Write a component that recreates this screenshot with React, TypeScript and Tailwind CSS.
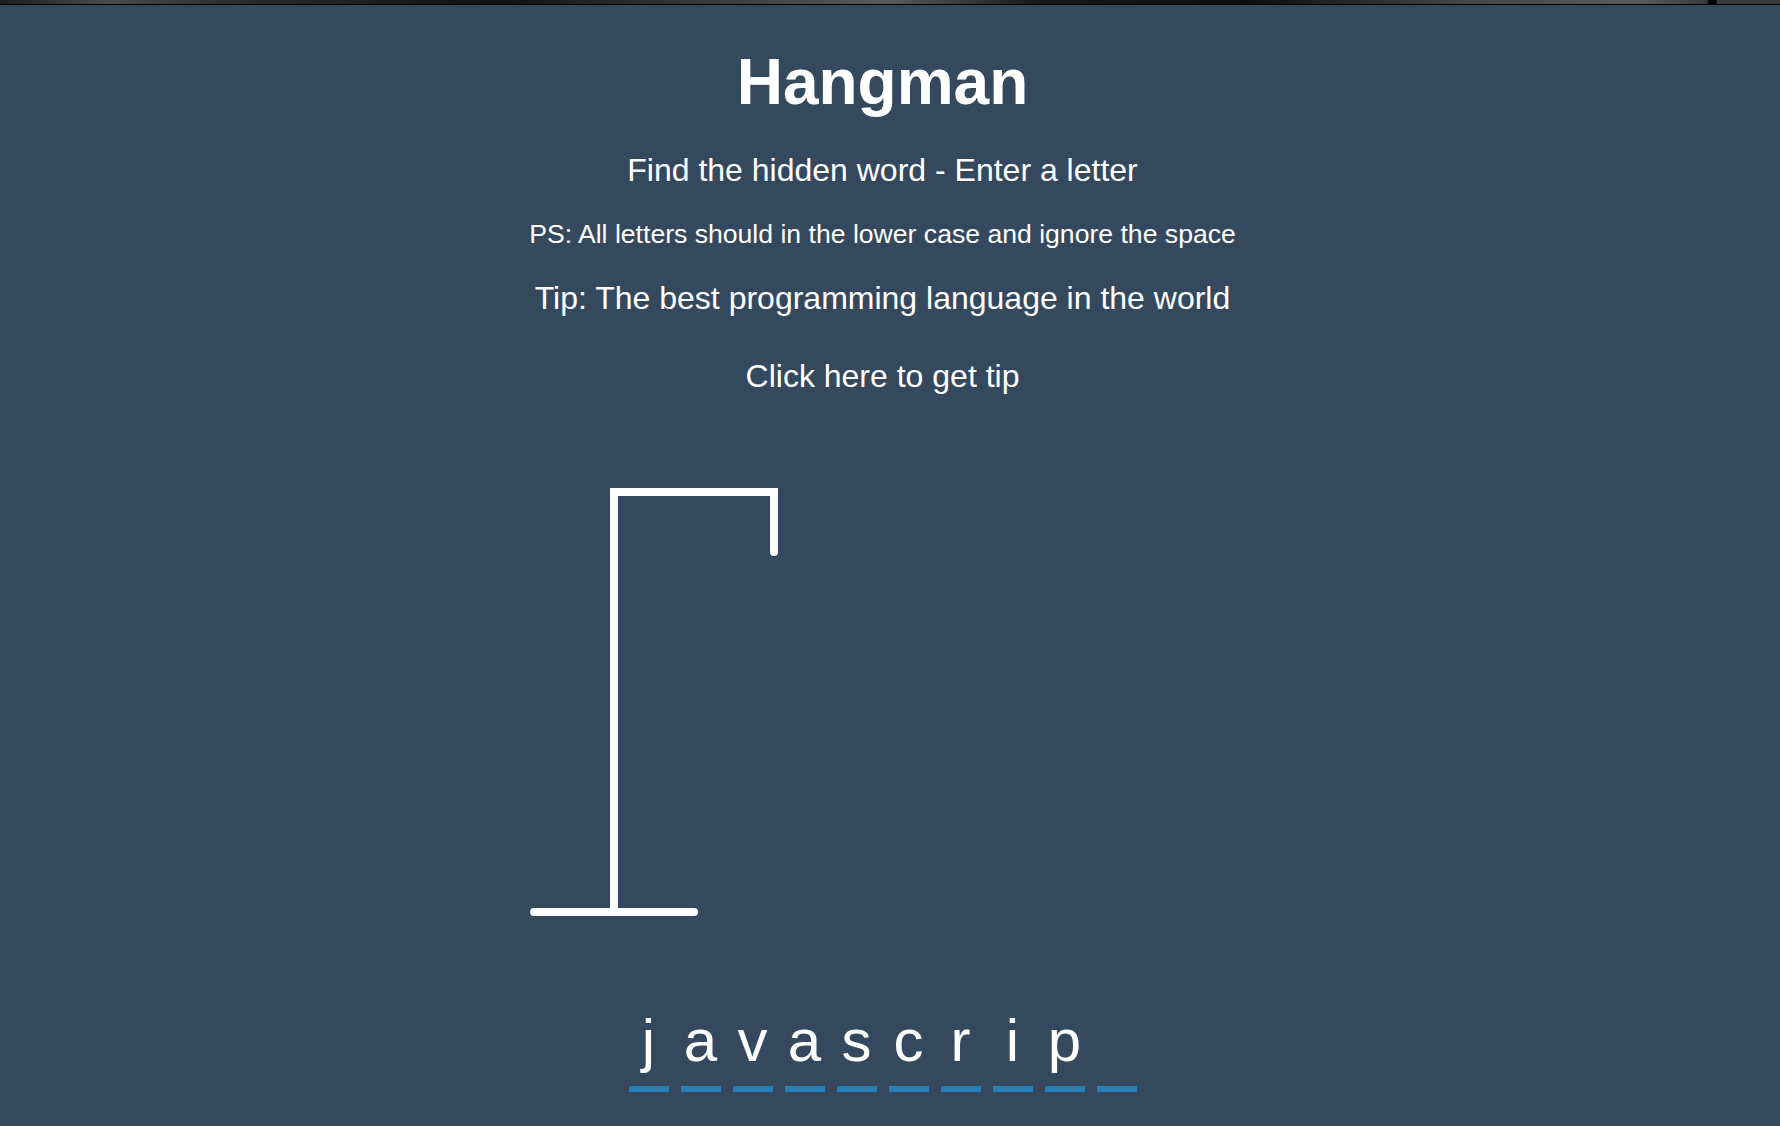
import React from 'react';

const word = ['j', 'a', 'v', 'a', 's', 'c', 'r', 'i', 'p', ''];

const Figure: React.FC = () => (
  <svg width="400" height="500" viewBox="0 0 200 250" className="block">
    <g stroke="#fff" strokeWidth="4" strokeLinecap="round" fill="none">
      {/* rod */}
      <line x1="60" y1="20" x2="140" y2="20" strokeLinecap="square" />
      <line x1="140" y1="20" x2="140" y2="50" />
      <line x1="60" y1="20" x2="60" y2="230" strokeLinecap="square" />
      <line x1="20" y1="230" x2="100" y2="230" />
    </g>
  </svg>
);

const App: React.FC = () => {
  return (
    <div className="relative min-h-[1126px] w-full bg-[#34495e] pr-[15px] text-white font-['Liberation_Sans',Arial,sans-serif] overflow-hidden">
      {/* browser chrome strip */}
      <div className="absolute left-0 top-0 h-[5px] w-full bg-[linear-gradient(90deg,#1c1c1c_0%,#4a4a4a_6%,#2a2a2a_14%,#111_28%,#3a3a3a_40%,#5a5a5a_50%,#1a1a1a_58%,#0c0c0c_70%,#444_82%,#5a5a5a_92%,#3a3a3a_95.9%,#000_96%,#000_96.4%,#3a3a3a_96.5%,#3a3a3a_100%)] border-b border-black"></div>

      <div className="flex flex-col items-center text-center">
        <h1 className="mt-[34px] text-[64px] font-bold leading-normal">Hangman</h1>
        <p className="mt-[16px] text-[32px] leading-normal">Find the hidden word - Enter a letter</p>
        <p className="mt-[21px] text-[26.6px] leading-normal">PS: All letters should in the lower case and ignore the space</p>
        <p className="mt-[19px] text-[32px] leading-normal">Tip: The best programming language in the world</p>
        <p className="mt-[30px] text-[32px] leading-normal cursor-pointer">Click here to get tip</p>

        <div className="mt-[52px] w-[777px]">
          <Figure />
        </div>

        <div className="mt-[44px] flex gap-[12px]">
          {word.map((ch, i) => (
            <span
              key={i}
              className="flex h-[96px] w-[40px] items-center justify-center border-b-[6px] border-[#2980b9] text-[60px] leading-normal"
            >
              {ch}
            </span>
          ))}
        </div>
      </div>
    </div>
  );
};

export default App;
